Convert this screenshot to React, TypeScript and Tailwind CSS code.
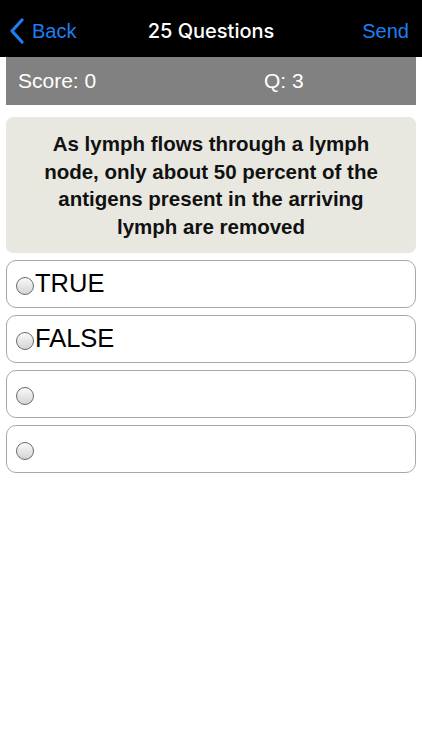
import React from "react";

function Radio() {
  return (
    <span className="inline-block w-[18px] h-[18px] mt-[4px] rounded-full border border-[#6b6b6b] bg-gradient-to-b from-[#fafafa] to-[#d4d4d4] shrink-0" />
  );
}

function Option({ label }: { label: string }) {
  return (
    <div className="h-[48px] mx-[6px] rounded-[10px] border border-[#a8a8a8] bg-white flex items-center pl-[9px]">
      <Radio />
      <span className="ml-[1px] text-[25.5px] text-black leading-none" style={{ fontFamily: '"Liberation Sans", Arial, sans-serif' }}>{label}</span>
    </div>
  );
}

export default function App() {
  return (
    <div className="w-[422px] h-[750px] bg-white" style={{ fontFamily: '"Liberation Sans", Arial, sans-serif' }}>
      <div className="h-[57px] bg-black flex items-center relative pt-[4px]">
        <div className="flex items-center pl-[9px]">
          <svg width="16" height="26" viewBox="0 0 16 26" className="mr-[7px]">
            <path d="M13 2 L3 13 L13 24" fill="none" stroke="#1f7ef3" strokeWidth="3.2" strokeLinecap="round" strokeLinejoin="round" />
          </svg>
          <span className="text-[#1f7ef3] text-[20px]">Back</span>
        </div>
        <div className="absolute left-0 right-0 text-center text-white text-[20px] font-medium pointer-events-none" style={{ fontFamily: 'Inter, "Liberation Sans", sans-serif' }}>25 Questions</div>
        <span className="ml-auto pr-[13px] text-[#1f7ef3] text-[20px]">Send</span>
      </div>
      <div className="mx-[6px] h-[48px] bg-[#818181] flex items-center text-white text-[21px]">
        <span className="pl-[12px] w-[258px]">Score: 0</span>
        <span>Q: 3</span>
      </div>
      <div className="mx-[6px] mt-[12px] h-[136px] rounded-[7px] bg-[#e8e8e1] flex items-center justify-center px-[10px]">
        <p className="text-center font-bold text-[20.5px] leading-[27.5px] text-[#111]">
          As lymph flows through a lymph<br />node, only about 50 percent of the<br />antigens present in the arriving<br />lymph are removed
        </p>
      </div>
      <div className="mt-[7px] flex flex-col gap-[7px]">
        <Option label="TRUE" />
        <Option label="FALSE" />
        <Option label="" />
        <Option label="" />
      </div>
    </div>
  );
}
